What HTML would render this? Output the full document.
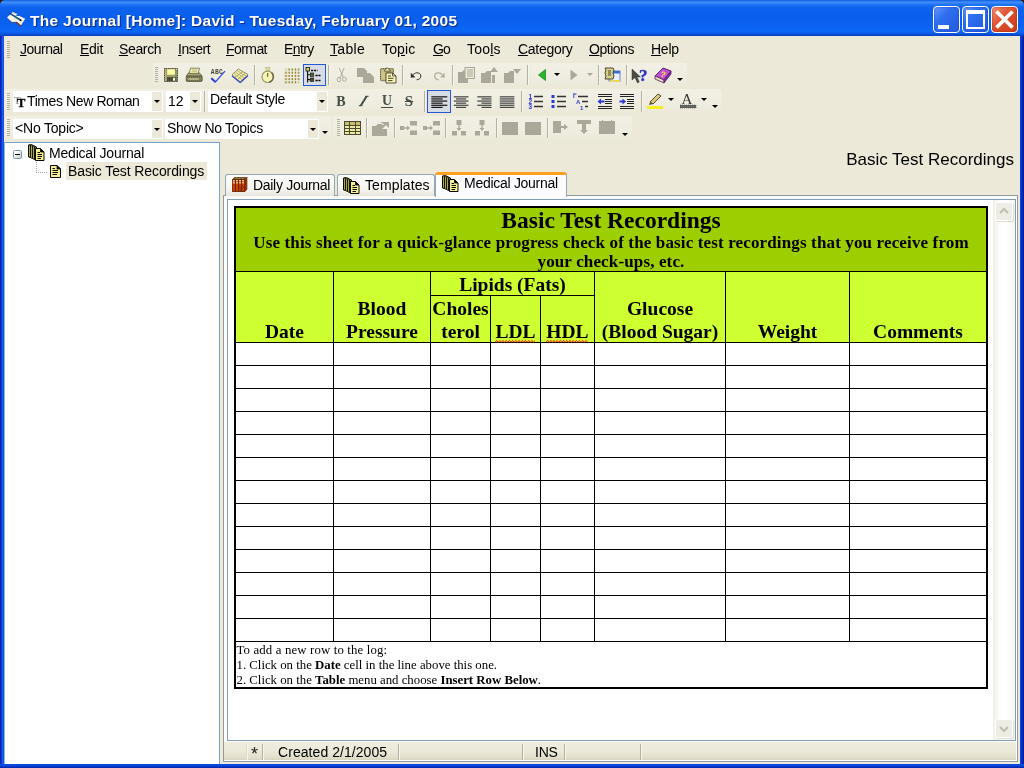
<!DOCTYPE html>
<html>
<head>
<meta charset="utf-8">
<title>The Journal</title>
<style>
*{box-sizing:border-box;margin:0;padding:0}
html,body{width:1024px;height:768px;overflow:hidden;background:#2a1a10}
body{font-family:"Liberation Sans",sans-serif;font-size:14px;color:#000;position:relative}
.abs{position:absolute}
#frame{position:absolute;left:0;top:6px;width:1024px;height:762px;background:linear-gradient(to right,#0a20b8 0,#0a24bc 1px,#1a5cf0 2.5px,#0a4ce0 4px,#0a4ce0 1020px,#0638d0 1021px,#0224b0 1023px,#001a90 1024px)}
#fb{position:absolute;left:0;top:763.5px;width:1024px;height:4.5px;background:linear-gradient(to bottom,#0a4ce0 0,#0a48dc 1.5px,#0630c4 3px,#001c98 4.5px)}
#client{position:absolute;left:4px;top:36px;width:1016px;height:728px;background:#ece9d8}
#titlebar{position:absolute;left:0;top:0;width:1024px;height:36px;border-radius:5px 5px 0 0;
 background:linear-gradient(to bottom,#0a58dc 0px,#2a78f0 1px,#3e8cf8 2.5px,#1c70f2 5px,#0c62ee 8px,#0a5eec 18px,#0a62f2 26px,#0c68f8 31px,#0a5ae6 33.5px,#0644c8 35px,#0644c8 36px)}
#title{position:absolute;left:30px;top:11px;height:20px;line-height:20px;color:#fff;font-weight:bold;font-size:15.5px;white-space:nowrap;text-shadow:1px 1px 1px #0a2a80;letter-spacing:0.3px}
.menu{position:absolute;top:40px;height:18px;line-height:18px;font-size:14px;white-space:nowrap;letter-spacing:-0.45px}
.menu u{text-decoration:underline;text-underline-offset:1px}
.tb{position:absolute;background:linear-gradient(to bottom,#f2f0e5 0,#efede0 60%,#ebe8d8 100%);border-radius:3px}
.sep{position:absolute;width:2px;border-left:1px solid #b4b1a0;border-right:1px solid #f6f5ee}
.grip{position:absolute;width:3px;background:repeating-linear-gradient(to bottom,#b4b19e 0,#b4b19e 1px,transparent 1px,transparent 2px)}
.combo{position:absolute;background:#fff;height:20px;font-size:14px;line-height:19px;white-space:nowrap;overflow:hidden}
.dd{position:absolute;width:10px;height:18px;background:#ece9d8}
.dd:after,.arr:after{content:"";position:absolute;left:2px;top:8px;border:3px solid transparent;border-top:3px solid #000;border-bottom:none}
.arr{position:absolute;width:8px;height:6px}
.arr:after{left:0;top:0}
.arr.g:after{border-top-color:#aca899}
.ico{position:absolute}

.tab{position:absolute;height:22px;border:1px solid #91a7b4;border-bottom:none;border-radius:3px 3px 0 0;background:linear-gradient(to bottom,#fdfdfc 0,#f4f3ee 70%,#e8e6dc 100%);font-size:14px;line-height:20px;white-space:nowrap;letter-spacing:-0.35px}
.hc{position:absolute;font-family:"Liberation Serif",serif;font-weight:bold;font-size:19.5px;line-height:23px;text-align:center;white-space:nowrap}
.sq{background:repeating-linear-gradient(135deg,#e03030 0,#e03030 1px,transparent 1px,transparent 2.5px) 0 100%/100% 2px no-repeat;padding-bottom:1px}
</style>
</head>
<body><div id="root" style="position:absolute;left:0;top:0;width:1024px;height:768px;will-change:transform">
<div id="frame"></div>
<div id="titlebar"></div>
<div id="client"></div>
<div id="fb"></div>
<div id="title">The Journal [Home]: David - Tuesday, February 01, 2005</div>

<svg class="ico" style="left:6px;top:11px" width="21" height="16" viewBox="0 0 21 16"><polygon points="1,7.5 6.5,12 9,11 14,15.5 15.5,14.5 11,10.5 5.5,10.5" fill="#7a3c28"/><polygon points="1,6.5 6.5,1.2 11,3.2 9.5,5 13.5,5 19.2,7.8 15,14.2 11,10.8 6,11" fill="#f8f4e8"/><path d="M6.5 1.2 L11 3.2 L9.5 5.2" fill="none" stroke="#d0c8a8" stroke-width="0.8"/><path d="M3.5 2.2 L14.5 9" stroke="#1a4488" stroke-width="1.5"/><path d="M9 6 L12 8" stroke="#1a8a70" stroke-width="1.5"/><circle cx="14.6" cy="9.3" r="1" fill="#111"/></svg>
<!-- window buttons -->
<div class="abs" style="left:933px;top:6px;width:27px;height:27px;border:1px solid #fff;border-radius:4px;background:linear-gradient(135deg,#6a9af8 0%,#3070f0 35%,#2058e0 100%);box-shadow:inset 0 0 2px #1840b0"></div>
<div class="abs" style="left:938px;top:25px;width:11px;height:4px;background:#fff"></div>
<div class="abs" style="left:962px;top:6px;width:27px;height:27px;border:1px solid #fff;border-radius:4px;background:linear-gradient(135deg,#6a9af8 0%,#3070f0 35%,#2058e0 100%);box-shadow:inset 0 0 2px #1840b0"></div>
<div class="abs" style="left:966px;top:10px;width:19px;height:19px;border:2px solid #fff;border-top-width:4px"></div>
<div class="abs" style="left:991px;top:6px;width:27px;height:27px;border:1px solid #fff;border-radius:4px;background:linear-gradient(135deg,#f09070 0%,#e05030 45%,#c83c18 100%);box-shadow:inset 0 0 2px #902810"></div>
<svg class="ico" style="left:994px;top:9px" width="21" height="21" viewBox="0 0 21 21"><path d="M2.5 2.5 L18.5 18.5 M18.5 2.5 L2.5 18.5" stroke="#fff" stroke-width="3.8"/></svg>
<!-- MENU -->
<div class="grip" style="left:7px;top:41px;height:17px"></div>
<div class="menu" style="left:20px;letter-spacing:-0.49px"><u>J</u>ournal</div>
<div class="menu" style="left:80px;letter-spacing:-0.27px"><u>E</u>dit</div>
<div class="menu" style="left:119px;letter-spacing:-0.36px"><u>S</u>earch</div>
<div class="menu" style="left:178px;letter-spacing:-0.5px"><u>I</u>nsert</div>
<div class="menu" style="left:226px;letter-spacing:-0.57px"><u>F</u>ormat</div>
<div class="menu" style="left:284px;letter-spacing:-0.59px">E<u>n</u>try</div>
<div class="menu" style="left:330px;letter-spacing:0.3px"><u>T</u>able</div>
<div class="menu" style="left:382px;letter-spacing:0.16px">To<u>p</u>ic</div>
<div class="menu" style="left:433px;letter-spacing:-1.0px"><u>G</u>o</div>
<div class="menu" style="left:467px;letter-spacing:0.2px">Too<u>l</u>s</div>
<div class="menu" style="left:518px;letter-spacing:-0.29px"><u>C</u>ategory</div>
<div class="menu" style="left:589px;letter-spacing:-0.47px"><u>O</u>ptions</div>
<div class="menu" style="left:651px;letter-spacing:-0.26px"><u>H</u>elp</div>

<!-- TOOLBARS -->
<div class="tb" style="left:153px;top:63px;width:534px;height:24px"></div>
<div class="tb" style="left:5px;top:89px;width:717px;height:25px"></div>
<div class="tb" style="left:5px;top:116px;width:326px;height:25px"></div>
<div class="tb" style="left:333px;top:116px;width:299px;height:25px"></div>
<!--TB1-->
<div class="grip" style="left:155px;top:67px;height:16px"></div>
<!-- save -->
<svg class="ico" style="left:164px;top:68px" width="14" height="14" viewBox="0 0 14 14"><rect x="0.4" y="0.4" width="13.2" height="13.2" fill="#6e7c5c" stroke="#34281c" stroke-width="0.8" stroke-dasharray="1.1 0.7"/><rect x="1.1" y="1.1" width="1.4" height="11.8" fill="#c8bc78"/><rect x="3.1" y="1.2" width="7.8" height="5.6" fill="#ffffa8"/><rect x="2.5" y="7.5" width="8.6" height="1" fill="#c8bc78"/><rect x="11.6" y="2.5" width="0.9" height="6" fill="#c8bc78"/><rect x="3" y="9.2" width="8.6" height="4" fill="#4e4c3c"/><rect x="9" y="9.8" width="2" height="2.9" fill="#ffffc4"/><rect x="11.8" y="1" width="1" height="1" fill="#f4f0d0"/></svg>
<!-- print -->
<svg class="ico" style="left:185px;top:67px" width="18" height="16" viewBox="0 0 18 16"><polygon points="3.6,5.8 14.4,5.8 17.2,9.2 1.2,9.2" fill="#a0a276" stroke="#4a4a32" stroke-width="0.7"/><polygon points="5.6,1.2 14.6,1.2 13.1,6.4 4.1,6.4" fill="#f6f2b4" stroke="#5a5a3c" stroke-width="0.7"/><path d="M7 3 H12.5 M6.5 4.7 H12" stroke="#a8a670" stroke-width="0.7"/><rect x="1.2" y="9.2" width="16" height="5.3" rx="1.2" fill="#80825c" stroke="#4a4a32" stroke-width="0.7"/><rect x="3.2" y="11.3" width="10.5" height="1.4" fill="#c8c494"/><path d="M2 10.2 H16.5 M2 13.6 H16.5" stroke="#55563a" stroke-width="0.6" stroke-dasharray="1 1"/></svg>
<!-- spell -->
<svg class="ico" style="left:209px;top:66px" width="18" height="18" viewBox="0 0 18 18"><text x="1.8" y="8.3" font-family="Liberation Mono" font-size="6.3" font-weight="bold" fill="#44443a" textLength="12">ABC</text><path d="M2.3 12.3 L6.5 16 L16 5.2" fill="none" stroke="#2a40e0" stroke-width="1.2"/><path d="M2.3 12.3 L6.5 16" fill="none" stroke="#2a40e0" stroke-width="1.9"/></svg>
<!-- open book -->
<svg class="ico" style="left:230px;top:67px" width="20" height="16" viewBox="0 0 20 16"><polyline points="2,8.8 10.2,15.6 18,8.6" fill="none" stroke="#2a40e0" stroke-width="1.3"/><polygon points="8.2,2 18,7.5 10.2,14.7 2,7.8" fill="#f6f2ac" stroke="#6a6a44" stroke-width="0.7"/><path d="M5.2 4.8 L14.2 11 M5 10.3 L13 4.7 M7.6 12.4 L15.5 6.1 M3.7 6.3 L12.2 12.8 M6.7 3.4 L16.2 9.2" stroke="#8a8a58" stroke-width="0.6"/></svg>
<div class="sep" style="left:254px;top:65px;height:20px"></div>
<!-- stopwatch -->
<svg class="ico" style="left:260px;top:66px" width="16" height="18" viewBox="0 0 16 18"><polygon points="5.5,1.5 10,1.5 9,5 6.5,5" fill="#e8e298" stroke="#a8a470" stroke-width="0.6"/><circle cx="7.7" cy="10.8" r="5.7" fill="#f8f4b4" stroke="#9a9868" stroke-width="1.2"/><path d="M11.5 6.5 A5.7 5.7 0 0 1 9 16.3" fill="none" stroke="#6a6844" stroke-width="1.3"/><path d="M7.7 7 V10.8" stroke="#4a4a30" stroke-width="1" fill="none"/></svg>
<!-- dotted grid -->
<svg class="ico" style="left:284px;top:67.5px" width="16" height="16" viewBox="0 0 16 16"><rect x="0.3" y="0.5" width="1.2" height="2" fill="#dcd488" opacity="0.35"/><rect x="1.4" y="0.5" width="1.2" height="2" fill="#88844c" opacity="0.35"/><rect x="3.5" y="0.5" width="1.2" height="2" fill="#dcd488" opacity="1.0"/><rect x="4.6" y="0.5" width="1.2" height="2" fill="#88844c" opacity="1.0"/><rect x="6.7" y="0.5" width="1.2" height="2" fill="#dcd488" opacity="1.0"/><rect x="7.8" y="0.5" width="1.2" height="2" fill="#88844c" opacity="1.0"/><rect x="9.9" y="0.5" width="1.2" height="2" fill="#dcd488" opacity="1.0"/><rect x="11.0" y="0.5" width="1.2" height="2" fill="#88844c" opacity="1.0"/><rect x="13.1" y="0.5" width="1.2" height="2" fill="#dcd488" opacity="1.0"/><rect x="14.2" y="0.5" width="1.2" height="2" fill="#88844c" opacity="1.0"/><rect x="0.3" y="3.7" width="1.2" height="2" fill="#dcd488" opacity="1.0"/><rect x="1.4" y="3.7" width="1.2" height="2" fill="#88844c" opacity="1.0"/><rect x="3.5" y="3.7" width="1.2" height="2" fill="#dcd488" opacity="1.0"/><rect x="4.6" y="3.7" width="1.2" height="2" fill="#88844c" opacity="1.0"/><rect x="6.7" y="3.7" width="1.2" height="2" fill="#dcd488" opacity="1.0"/><rect x="7.8" y="3.7" width="1.2" height="2" fill="#88844c" opacity="1.0"/><rect x="9.9" y="3.7" width="1.2" height="2" fill="#dcd488" opacity="1.0"/><rect x="11.0" y="3.7" width="1.2" height="2" fill="#88844c" opacity="1.0"/><rect x="13.1" y="3.7" width="1.2" height="2" fill="#dcd488" opacity="1.0"/><rect x="14.2" y="3.7" width="1.2" height="2" fill="#88844c" opacity="1.0"/><rect x="0.3" y="6.9" width="1.2" height="2" fill="#dcd488" opacity="1.0"/><rect x="1.4" y="6.9" width="1.2" height="2" fill="#88844c" opacity="1.0"/><rect x="3.5" y="6.9" width="1.2" height="2" fill="#dcd488" opacity="1.0"/><rect x="4.6" y="6.9" width="1.2" height="2" fill="#88844c" opacity="1.0"/><rect x="6.7" y="6.9" width="1.2" height="2" fill="#dcd488" opacity="1.0"/><rect x="7.8" y="6.9" width="1.2" height="2" fill="#88844c" opacity="1.0"/><rect x="9.9" y="6.9" width="1.2" height="2" fill="#dcd488" opacity="1.0"/><rect x="11.0" y="6.9" width="1.2" height="2" fill="#88844c" opacity="1.0"/><rect x="13.1" y="6.9" width="1.2" height="2" fill="#dcd488" opacity="1.0"/><rect x="14.2" y="6.9" width="1.2" height="2" fill="#88844c" opacity="1.0"/><rect x="0.3" y="10.1" width="1.2" height="2" fill="#dcd488" opacity="1.0"/><rect x="1.4" y="10.1" width="1.2" height="2" fill="#88844c" opacity="1.0"/><rect x="3.5" y="10.1" width="1.2" height="2" fill="#dcd488" opacity="1.0"/><rect x="4.6" y="10.1" width="1.2" height="2" fill="#88844c" opacity="1.0"/><rect x="6.7" y="10.1" width="1.2" height="2" fill="#dcd488" opacity="1.0"/><rect x="7.8" y="10.1" width="1.2" height="2" fill="#88844c" opacity="1.0"/><rect x="9.9" y="10.1" width="1.2" height="2" fill="#dcd488" opacity="1.0"/><rect x="11.0" y="10.1" width="1.2" height="2" fill="#88844c" opacity="1.0"/><rect x="13.1" y="10.1" width="1.2" height="2" fill="#dcd488" opacity="1.0"/><rect x="14.2" y="10.1" width="1.2" height="2" fill="#88844c" opacity="1.0"/><rect x="0.3" y="13.3" width="1.2" height="2" fill="#dcd488" opacity="1.0"/><rect x="1.4" y="13.3" width="1.2" height="2" fill="#88844c" opacity="1.0"/><rect x="3.5" y="13.3" width="1.2" height="2" fill="#dcd488" opacity="1.0"/><rect x="4.6" y="13.3" width="1.2" height="2" fill="#88844c" opacity="1.0"/><rect x="6.7" y="13.3" width="1.2" height="2" fill="#dcd488" opacity="1.0"/><rect x="7.8" y="13.3" width="1.2" height="2" fill="#88844c" opacity="1.0"/><rect x="9.9" y="13.3" width="1.2" height="2" fill="#dcd488" opacity="1.0"/><rect x="11.0" y="13.3" width="1.2" height="2" fill="#88844c" opacity="1.0"/><rect x="13.1" y="13.3" width="1.2" height="2" fill="#dcd488" opacity="0.4"/><rect x="14.2" y="13.3" width="1.2" height="2" fill="#88844c" opacity="0.4"/></svg>
<!-- tree (checked) -->
<div class="abs" style="left:303px;top:64px;width:23px;height:22px;border:1px solid #2458d8;background:#d8dce4"></div>
<svg class="ico" style="left:305px;top:66px" width="18" height="18" viewBox="0 0 18 18"><rect x="1" y="1.5" width="3.5" height="3.5" fill="#e0d850" stroke="#222" stroke-width="0.9"/><path d="M2.6 5 V16.5 M2.6 8.7 H5.5 M2.6 13.6 H5.5" stroke="#111" stroke-width="1.1" fill="none"/><rect x="5.3" y="7" width="3.4" height="3.4" fill="#4a6a28" stroke="#222" stroke-width="0.7"/><rect x="5.3" y="12" width="3.4" height="3.4" fill="#4a4a28" stroke="#222" stroke-width="0.7"/><path d="M6 4.5 H12.5 M10.5 9.5 H15.5 M10.5 14.5 H15.5" stroke="#000" stroke-width="1.3" stroke-dasharray="2.2 0.8"/></svg>
<div class="sep" style="left:328px;top:65px;height:20px"></div>
<!-- cut disabled -->
<svg class="ico" style="left:336px;top:66px" width="12" height="18" viewBox="0 0 12 18"><path d="M3.3 2 L7.6 12 M8.2 2 L4 12" stroke="#b0ad9c" stroke-width="1" fill="none"/><ellipse cx="3" cy="13.6" rx="1.8" ry="2.2" fill="none" stroke="#b0ad9c" stroke-width="1"/><ellipse cx="8.4" cy="13.2" rx="1.8" ry="2.2" fill="none" stroke="#b0ad9c" stroke-width="1"/></svg>
<!-- copy disabled -->
<svg class="ico" style="left:357px;top:66.5px" width="18" height="16" viewBox="0 0 18 16"><polygon points="0,1 7,1 10,4 10,10 0,10" fill="#aca899"/><polygon points="6,6 13,6 17,10 17,16 6,16" fill="#aca899"/></svg>
<!-- paste -->
<svg class="ico" style="left:379px;top:66px" width="18" height="18" viewBox="0 0 18 18"><rect x="1.5" y="2.6" width="13" height="12.2" rx="0.8" fill="#b8ac70" stroke="#3c3c28" stroke-width="0.8" stroke-dasharray="1.2 0.6"/><rect x="2.5" y="4" width="4" height="9.5" fill="#cfc58c"/><polygon points="5.2,5.2 8.2,1.6 11.5,5.2" fill="#f4f0b0" stroke="#3c3c28" stroke-width="0.7"/><polygon points="7,7 13.5,7 17,10 17,17 7,17" fill="#fcf8b4" stroke="#2c2c1c" stroke-width="0.8"/><path d="M13.5 7 V10 H17" fill="none" stroke="#2c2c1c" stroke-width="0.7"/><path d="M9 10 H12 M9 12.3 H14.5 M9 14.6 H13.5" stroke="#2c2c1c" stroke-width="0.9"/></svg>
<div class="sep" style="left:402px;top:65px;height:20px"></div>
<!-- undo -->
<svg class="ico" style="left:410px;top:71px" width="12.5" height="10" viewBox="0 0 14 12"><path d="M3 4.5 C7 0.5 12.5 2 12.5 6 C12.5 9 10 10.5 7.5 10.5" fill="none" stroke="#333" stroke-width="1.2"/><polygon points="0.5,2 0.5,8 6,7.5" fill="#333"/></svg>
<!-- redo disabled -->
<svg class="ico" style="left:433px;top:71px" width="12.5" height="10" viewBox="0 0 14 12"><path d="M11 4.5 C7 0.5 1.5 2 1.5 6 C1.5 9 4 10.5 6.5 10.5" fill="none" stroke="#b4b0a0" stroke-width="1.5"/><polygon points="13.5,2 13.5,8 8,7.5" fill="#b4b0a0"/></svg>
<div class="sep" style="left:452px;top:65px;height:20px"></div>
<!-- disabled icons -->
<svg class="ico" style="left:458px;top:67px" width="17" height="16" viewBox="0 0 17 16"><polygon points="0,5 4,5 6,3 10,3 10,16 0,16" fill="#aca899"/><rect x="7" y="0.5" width="9.5" height="11" fill="#ece9d8" stroke="#aca899" stroke-width="1"/><path d="M9 3 H15 M9 5 H15 M9 7 H15 M9 9 H15" stroke="#aca899" stroke-width="1"/></svg>
<svg class="ico" style="left:481px;top:67px" width="18" height="16" viewBox="0 0 18 16"><polygon points="0,6 4,6 6,4 10,4 10,16 0,16" fill="#aca899"/><polygon points="13,0 9,5 17,5" fill="#aca899"/><rect x="11" y="8" width="3" height="8" fill="#aca899"/></svg>
<svg class="ico" style="left:504px;top:67px" width="18" height="16" viewBox="0 0 18 16"><polygon points="0,6 4,6 6,4 10,4 10,16 0,16" fill="#aca899"/><polygon points="9,2 17,2 13,7" fill="#aca899"/></svg>
<div class="sep" style="left:527px;top:65px;height:20px"></div>
<!-- nav arrows -->
<svg class="ico" style="left:538px;top:69px" width="8" height="12" viewBox="0 0 8 12"><polygon points="7.5,0.5 7.5,11.5 0.5,6" fill="#2cb42c" stroke="#1a8a1a" stroke-width="0.8"/></svg>
<div class="arr" style="left:554px;top:73px"></div>
<svg class="ico" style="left:570px;top:69px" width="8" height="12" viewBox="0 0 8 12"><polygon points="0.5,0.5 0.5,11.5 7.5,6" fill="#aca899"/></svg>
<div class="arr g" style="left:587px;top:73px"></div>
<div class="sep" style="left:598px;top:65px;height:20px"></div>
<!-- contacts -->
<svg class="ico" style="left:604px;top:67px" width="17" height="16" viewBox="0 0 17 16"><rect x="5" y="4" width="11" height="10" fill="#e8f0ff" stroke="#6a88c8" stroke-width="1"/><rect x="5" y="4" width="11" height="2.5" fill="#3a6ad0"/><rect x="6" y="13" width="10" height="2" fill="#e8d860"/><polygon points="1,1 9,1 10,3 9,6 10,9 9,12 1,12 2,9 1,6 2,3" fill="#d8d08a" stroke="#4a4a30" stroke-width="1"/><path d="M4 4 H7 M4 6 H7 M4 8 H7" stroke="#4a4a30" stroke-width="1"/></svg>
<div class="sep" style="left:626px;top:65px;height:20px"></div>
<!-- help cursor -->
<svg class="ico" style="left:631px;top:66px" width="18" height="18" viewBox="0 0 18 18"><polygon points="1,3 1,14 4,11.5 6.5,17 8.3,16 6,11 9.5,11" fill="#484c40" stroke="#30342c" stroke-width="0.5"/><text x="8" y="14.5" font-family="Liberation Serif" font-size="17" font-weight="bold" fill="#2a30c8" stroke="#2a30c8" stroke-width="0.4">?</text></svg>
<!-- purple book -->
<svg class="ico" style="left:654px;top:66px" width="18" height="18" viewBox="0 0 18 18"><polygon points="1,10 9,2 17,5 10,14" fill="#c050d0" stroke="#5a2070" stroke-width="1"/><polygon points="1,10 10,14 10,17 1,13" fill="#e8e0b0" stroke="#5a2070" stroke-width="0.8"/><polygon points="10,14 17,5 17,8 10,17" fill="#7a2a98" stroke="#5a2070" stroke-width="0.8"/><text x="6.5" y="11.5" font-family="Liberation Sans" font-size="8.5" font-weight="bold" fill="#f8e838" transform="rotate(18 9 9)">?</text></svg>
<div class="arr" style="left:677px;top:78px"></div>
<!--TB2-->
<div class="grip" style="left:7px;top:93px;height:18px"></div>
<div class="combo" style="left:13px;top:91px;width:150px;height:21px"><span style="position:absolute;left:14px;top:1px;letter-spacing:-0.4px">Times New Roman</span></div>
<svg class="ico" style="left:14px;top:95px" width="13" height="13" viewBox="0 0 13 13"><text x="0" y="9" font-family="Liberation Serif" font-size="10" font-weight="bold" fill="#999">T</text><text x="3" y="12" font-family="Liberation Serif" font-size="12.5" font-weight="bold" fill="#000" stroke="#000" stroke-width="0.3">T</text></svg>
<div class="dd" style="left:152px;top:92px;height:19px"></div>
<div class="combo" style="left:166px;top:91px;width:35px;height:21px"><span style="position:absolute;left:2px;top:1px">12</span></div>
<div class="dd" style="left:190px;top:92px;height:19px"></div>
<div class="sep" style="left:204px;top:91px;height:21px"></div>
<div class="combo" style="left:208px;top:91px;width:120px;height:21px"><span style="position:absolute;left:2px;top:-1px;letter-spacing:-0.35px">Default Style</span></div>
<div class="dd" style="left:317px;top:92px;height:19px"></div>
<div class="abs" style="left:335px;top:93px;width:12px;font-family:'Liberation Serif',serif;font-weight:bold;font-size:14px;line-height:17px;color:#444c44;text-align:center">B</div>
<svg class="ico" style="left:358px;top:95px" width="12" height="12" viewBox="0 0 12 12"><polygon points="7.6,1 9.9,1 3.7,11 1.4,11" fill="#444c44"/><rect x="7" y="0.8" width="3.6" height="1" fill="#444c44"/><rect x="0.8" y="10.2" width="3.6" height="1" fill="#444c44"/></svg>
<div class="abs" style="left:381px;top:92.5px;width:12px;font-family:'Liberation Serif',serif;font-weight:bold;font-size:13.8px;line-height:16px;color:#444c44;text-align:center">U</div><div class="abs" style="left:381px;top:107px;width:12px;height:1px;background:#444c44"></div>
<div class="abs" style="left:403px;top:93px;width:12px;font-family:'Liberation Serif',serif;font-weight:bold;font-size:15px;line-height:17px;color:#444c44;text-align:center;text-decoration:line-through">S</div>
<div class="sep" style="left:424px;top:91px;height:21px"></div>
<div class="abs" style="left:427px;top:90px;width:24px;height:23px;border:1px solid #2458d8;background:#d8dce4"></div>
<svg class="ico" style="left:431px;top:96px" width="17" height="13" viewBox="0 0 17 13"><rect x="0.3" y="0.3" width="16" height="1.1" fill="#000"/><rect x="0.3" y="2.4" width="11.3" height="1.1" fill="#000"/><rect x="0.3" y="4.5" width="16" height="1.1" fill="#000"/><rect x="0.3" y="6.6" width="11.3" height="1.1" fill="#000"/><rect x="0.3" y="8.7" width="16" height="1.1" fill="#000"/><rect x="0.3" y="10.8" width="11.3" height="1.1" fill="#000"/></svg>
<svg class="ico" style="left:453px;top:96px" width="17" height="13" viewBox="0 0 17 13"><rect x="0.8" y="0.3" width="14.7" height="1.1" fill="#333"/><rect x="3" y="2.4" width="10.2" height="1.1" fill="#333"/><rect x="0.8" y="4.5" width="14.7" height="1.1" fill="#333"/><rect x="3" y="6.6" width="10.2" height="1.1" fill="#333"/><rect x="0.8" y="8.7" width="14.7" height="1.1" fill="#333"/><rect x="3" y="10.8" width="10.2" height="1.1" fill="#333"/></svg>
<svg class="ico" style="left:477px;top:96px" width="17" height="13" viewBox="0 0 17 13"><rect x="0.3" y="0.3" width="14.2" height="1.1" fill="#333"/><rect x="4.5" y="2.4" width="10" height="1.1" fill="#333"/><rect x="0.3" y="4.5" width="14.2" height="1.1" fill="#333"/><rect x="4.5" y="6.6" width="10" height="1.1" fill="#333"/><rect x="0.3" y="8.7" width="14.2" height="1.1" fill="#333"/><rect x="4.5" y="10.8" width="10" height="1.1" fill="#333"/></svg>
<svg class="ico" style="left:499px;top:96px" width="17" height="13" viewBox="0 0 17 13"><rect x="0.8" y="0.3" width="14.6" height="1.1" fill="#333"/><rect x="0.8" y="2.4" width="14.6" height="1.1" fill="#333"/><rect x="0.8" y="4.5" width="14.6" height="1.1" fill="#333"/><rect x="0.8" y="6.6" width="14.6" height="1.1" fill="#333"/><rect x="0.8" y="8.7" width="14.6" height="1.1" fill="#333"/><rect x="0.8" y="10.8" width="14.6" height="1.1" fill="#333"/></svg>
<div class="sep" style="left:521px;top:91px;height:21px"></div>
<!-- numbered list -->
<svg class="ico" style="left:528px;top:93px" width="16" height="17" viewBox="0 0 16 17"><g fill="#2a3ad0" font-family="Liberation Sans" font-weight="bold" font-size="6.5"><text x="0.5" y="5.5">1</text><text x="0.5" y="10.5">2</text><text x="0.5" y="15.8">3</text></g><path d="M6 3.5 H15 M6 8.5 H15 M6 13.5 H15" stroke="#333" stroke-width="1.3"/></svg>
<!-- bullet list -->
<svg class="ico" style="left:551px;top:93px" width="16" height="17" viewBox="0 0 16 17"><g fill="#2a3ad0"><rect x="0.5" y="2" width="3" height="3"/><rect x="0.5" y="7" width="3" height="3"/><rect x="0.5" y="12" width="3" height="3"/></g><path d="M6 3.5 H15 M6 8.5 H15 M6 13.5 H15" stroke="#333" stroke-width="1.3"/></svg>
<!-- outline list -->
<svg class="ico" style="left:573px;top:93px" width="16" height="17" viewBox="0 0 16 17"><g fill="#2a3ad0" font-family="Liberation Sans" font-weight="bold" font-size="6"><text x="0" y="5">I</text><text x="3" y="11">A</text><text x="7" y="17">1</text></g><rect x="0" y="0.5" width="3.5" height="1" fill="#2a3ad0"/><path d="M5 3.5 H15 M9 8.5 H15 M12 13.5 H15" stroke="#333" stroke-width="1.4"/></svg>
<!-- outdent -->
<svg class="ico" style="left:597px;top:93px" width="16" height="17" viewBox="0 0 16 17"><path d="M1 1.5 H15 M1 3.5 H15 M8 6.5 H15 M8 8.5 H15 M8 10.5 H15 M1 13.5 H15 M1 15.5 H15" stroke="#222" stroke-width="1"/><polygon points="0.5,8.5 4,5.5 4,11.5" fill="#2a3ad0"/><rect x="4" y="7.5" width="3.5" height="2" fill="#2a3ad0"/></svg>
<!-- indent -->
<svg class="ico" style="left:619px;top:93px" width="16" height="17" viewBox="0 0 16 17"><path d="M1 1.5 H15 M1 3.5 H15 M8 6.5 H15 M8 8.5 H15 M8 10.5 H15 M1 13.5 H15 M1 15.5 H15" stroke="#222" stroke-width="1"/><polygon points="7,8.5 3.5,5.5 3.5,11.5" fill="#2a3ad0"/><rect x="0.5" y="7.5" width="3.5" height="2" fill="#2a3ad0"/></svg>
<div class="sep" style="left:641px;top:91px;height:21px"></div>
<!-- highlighter -->
<svg class="ico" style="left:647px;top:93px" width="17" height="16" viewBox="0 0 17 16"><polygon points="3,9 11,1 14,3 6,11" fill="#d8c880" stroke="#5a5030" stroke-width="1"/><polygon points="3,9 6,11 2,12" fill="#5a5030"/><rect x="0" y="13" width="16" height="3" fill="#f4f020"/></svg>
<div class="arr" style="left:668px;top:98px"></div>
<!-- font color -->
<svg class="ico" style="left:680px;top:92px" width="17" height="17" viewBox="0 0 17 17"><text x="1.5" y="11.5" font-family="Liberation Serif" font-size="15" fill="#333">A</text><rect x="0" y="13" width="16" height="3" fill="#666" stroke="#333" stroke-width="0.6" stroke-dasharray="1 1"/></svg>
<div class="arr" style="left:701px;top:98px"></div>
<div class="arr" style="left:712px;top:105px"></div>
<!--TB3-->
<div class="grip" style="left:7px;top:119px;height:18px"></div>
<div class="combo" style="left:13px;top:118.5px;width:150px"><span style="position:absolute;left:2px;top:0.3px;letter-spacing:-0.2px">&lt;No Topic&gt;</span></div>
<div class="dd" style="left:152px;top:119.5px"></div>
<div class="combo" style="left:165px;top:118.5px;width:154px"><span style="position:absolute;left:2px;top:0.3px;letter-spacing:-0.3px">Show No Topics</span></div>
<div class="dd" style="left:308px;top:119.5px"></div>
<div class="arr" style="left:322px;top:131px"></div>
<div class="grip" style="left:337px;top:119px;height:18px"></div>
<!-- table icon -->
<svg class="ico" style="left:344px;top:121px" width="17" height="14" viewBox="0 0 17 14"><rect x="0.5" y="0.5" width="16" height="13" fill="#f0eaa0" stroke="#4a4a30" stroke-width="1"/><rect x="1" y="1" width="15" height="3" fill="#c8c070"/><path d="M0.5 4.5 H16.5 M0.5 7.5 H16.5 M0.5 10.5 H16.5 M5.5 1 V13 M11.5 1 V13" stroke="#4a4a30" stroke-width="1"/></svg>
<div class="sep" style="left:366px;top:118px;height:20px"></div>
<svg class="ico" style="left:372px;top:120px" width="18" height="16" viewBox="0 0 18 16"><polygon points="0,6 4,6 6,4 10,4 10,16 0,16" fill="#aca899"/><polygon points="8,2 17,2 17,8 14,5 10,9 8,7 12,4" fill="#aca899"/><rect x="10" y="9" width="5" height="7" fill="#aca899"/></svg>
<div class="sep" style="left:394px;top:118px;height:20px"></div>
<svg class="ico" style="left:400px;top:121px" width="17" height="14" viewBox="0 0 17 14"><g fill="#aca899"><rect x="0" y="5" width="4" height="4"/><polygon points="4,6.3 7,6.3 7,4.5 10,7 7,9.5 7,7.7 4,7.7"/><rect x="10" y="0" width="7" height="4.5"/><rect x="10" y="9.5" width="7" height="4.5"/></g></svg>
<svg class="ico" style="left:423px;top:121px" width="17" height="14" viewBox="0 0 17 14"><g fill="#aca899"><rect x="0" y="5" width="4" height="4"/><polygon points="4,6.3 7,6.3 7,4.5 10,7 7,9.5 7,7.7 4,7.7"/><rect x="10" y="0" width="7" height="4.5"/><rect x="10" y="9.5" width="7" height="4.5"/></g></svg>
<div class="sep" style="left:445px;top:118px;height:20px"></div>
<svg class="ico" style="left:452px;top:120px" width="14" height="16" viewBox="0 0 14 16"><g fill="#aca899"><rect x="4.5" y="0" width="5" height="5"/><polygon points="6.3,5 7.7,5 7.7,8 9.5,8 7,11 4.5,8 6.3,8"/><rect x="0" y="11" width="5" height="4.5"/><rect x="9" y="11" width="5" height="4.5"/></g></svg>
<svg class="ico" style="left:475px;top:120px" width="14" height="16" viewBox="0 0 14 16"><g fill="#aca899"><rect x="4.5" y="0" width="5" height="5"/><polygon points="6.3,5 7.7,5 7.7,8 9.5,8 7,11 4.5,8 6.3,8"/><rect x="0" y="11" width="5" height="4.5"/><rect x="9" y="11" width="5" height="4.5"/></g></svg>
<div class="sep" style="left:496px;top:118px;height:20px"></div>
<div class="abs" style="left:502px;top:122px;width:16px;height:13px;background:#aca899"></div>
<div class="abs" style="left:525px;top:122px;width:16px;height:13px;background:#aca899"></div>
<div class="sep" style="left:547px;top:118px;height:20px"></div>
<svg class="ico" style="left:553px;top:121px" width="16" height="14" viewBox="0 0 16 14"><g fill="#aca899"><rect x="0" y="0" width="8" height="12"/><polygon points="8,5 11,5 11,3 15,6 11,9 11,7 8,7"/></g></svg>
<svg class="ico" style="left:577px;top:120px" width="14" height="16" viewBox="0 0 14 16"><g fill="#aca899"><rect x="0" y="0" width="14" height="4"/><rect x="5" y="4" width="4" height="6"/><polygon points="3,10 11,10 7,14"/></g></svg>
<svg class="ico" style="left:599px;top:120px" width="17" height="14" viewBox="0 0 17 14"><g fill="#aca899"><rect x="0" y="1" width="16" height="13"/><rect x="3" y="0" width="1" height="2"/><rect x="12" y="0" width="1" height="2"/></g></svg>
<div class="arr" style="left:622px;top:133px"></div>
<!--TREE-->
<div class="abs" style="left:4px;top:142px;width:216px;height:622px;background:#fff;border:1px solid #78a4c8;border-left-color:#9ab8d4;border-bottom:none"></div>
<div class="abs" style="left:13px;top:150px;width:9px;height:9px;border:1px solid #7898b8;border-radius:1.5px;background:linear-gradient(135deg,#fff 20%,#d0ccbc)"></div>
<div class="abs" style="left:15px;top:154px;width:5px;height:1px;background:#000"></div>
<svg class="ico" style="left:28px;top:144px" width="17" height="17" viewBox="0 0 17 17"><polygon points="0.5,1 2.5,0.5 4.5,1 6.5,2 8.5,3 8.5,16 6.5,15.5 4.5,14.5 2.5,13.5 0.5,13" fill="#7a8030" stroke="#0a0a04" stroke-width="1"/><path d="M2.5 1 V13.5 M4.5 1.5 V14.5 M6.5 2.5 V15.5" stroke="#0a0a04" stroke-width="0.9"/><path d="M1.5 2 V12.5 M3.5 2.5 V13.5 M5.5 3.5 V14.5" stroke="#c8c850" stroke-width="0.6"/><polygon points="7.5,4.5 12.5,4.5 16,8 16,16.5 7.5,16.5" fill="#f8f090" stroke="#0a0a04" stroke-width="1"/><path d="M12.5 4.5 V8 H16" fill="#0a0a04" stroke="#0a0a04" stroke-width="0.8"/><path d="M9.5 8.5 H12 M9.5 10.5 H14 M9.5 12.5 H14 M9.5 14.5 H13" stroke="#0a0a04" stroke-width="1"/></svg>
<div class="abs" style="left:49px;top:144px;line-height:18px;font-size:14px;letter-spacing:-0.2px;white-space:nowrap">Medical Journal</div>
<div class="abs" style="left:36px;top:162px;width:1px;height:10px;background:repeating-linear-gradient(to bottom,#a0a090 0,#a0a090 1px,transparent 1px,transparent 2px)"></div>
<div class="abs" style="left:36px;top:172px;width:12px;height:1px;background:repeating-linear-gradient(to right,#a0a090 0,#a0a090 1px,transparent 1px,transparent 2px)"></div>
<svg class="ico" style="left:50px;top:165px" width="11" height="13" viewBox="0 0 11 13"><polygon points="0.5,0.5 7,0.5 10.5,4 10.5,12.5 0.5,12.5" fill="#f8f090" stroke="#0a0a04" stroke-width="1"/><path d="M7 0.5 V4 H10.5 Z" fill="#0a0a04" stroke="#0a0a04" stroke-width="0.8"/><path d="M2.5 3.5 H5 M2.5 5.5 H8 M2.5 7.5 H8 M2.5 9.5 H7" stroke="#0a0a04" stroke-width="1"/></svg>
<div class="abs" style="left:66px;top:162px;width:141px;height:18px;background:#ece9d8"></div>
<div class="abs" style="left:68px;top:162px;line-height:18px;font-size:14px;letter-spacing:-0.1px;white-space:nowrap">Basic Test Recordings</div>
<!--RIGHT-->
<div class="abs" style="right:10px;top:150px;font-size:17px;line-height:20px;white-space:nowrap;letter-spacing:0px" id="hdr">Basic Test Recordings</div>
<!-- tab pane -->
<div class="abs" style="left:223px;top:195px;width:795px;height:567px;border:1px solid #919b9c;background:#fcfcfe;box-shadow:inset -1px -1px 0 #fff"></div>
<div class="tab" style="left:225px;top:174px;width:110px"><span class="abs" style="left:27px;top:0px;letter-spacing:-0.3px">Daily Journal</span></div>
<svg class="ico" style="left:232px;top:176.5px" width="16" height="16" viewBox="0 0 16 16"><polygon points="0.3,2.8 2.3,0.6 14.9,0.6 12.8,2.8" fill="#9aa438" stroke="#5a1400" stroke-width="0.7"/><polygon points="12.8,2.8 14.9,0.6 14.9,12.2 12.8,14.4" fill="#b43c00" stroke="#5a1400" stroke-width="0.7"/><rect x="0.3" y="2.8" width="12.5" height="11.6" fill="#c84400" stroke="#5a1400" stroke-width="0.8"/><path d="M3.5 2.8 V14.4 M6.6 2.8 V14.4 M9.6 2.8 V14.4" stroke="#5a1400" stroke-width="0.8"/><path d="M3.4 0.8 L2.2 2.6 M6.5 0.8 L5.3 2.6 M9.6 0.8 L8.4 2.6 M12.6 0.8 L11.4 2.6" stroke="#5a1400" stroke-width="0.8"/><rect x="0.9" y="3.2" width="1.9" height="1.1" fill="#f4ecb0"/><rect x="0.9" y="5.3" width="1.9" height="1.1" fill="#f4ecb0"/><rect x="4.0" y="3.2" width="1.9" height="1.1" fill="#f4ecb0"/><rect x="4.0" y="5.3" width="1.9" height="1.1" fill="#f4ecb0"/><rect x="7.1" y="3.2" width="1.9" height="1.1" fill="#f4ecb0"/><rect x="7.1" y="5.3" width="1.9" height="1.1" fill="#f4ecb0"/><rect x="10.1" y="3.2" width="1.9" height="1.1" fill="#f4ecb0"/><rect x="10.1" y="5.3" width="1.9" height="1.1" fill="#f4ecb0"/><rect x="1" y="7.2" width="1" height="1" fill="#f01010"/><path d="M7.5 10 L9 12 M10.5 9 L12 11.5 M8 12.5 L9.2 14" stroke="#7a2400" stroke-width="0.8"/></svg>
<div class="tab" style="left:337px;top:174px;width:98px"><span class="abs" style="left:27px;top:0px;letter-spacing:0.1px">Templates</span></div>
<svg class="ico" style="left:343px;top:177px" width="17" height="17" viewBox="0 0 17 17"><polygon points="0.5,1 2.5,0.5 4.5,1 6.5,2 8.5,3 8.5,16 6.5,15.5 4.5,14.5 2.5,13.5 0.5,13" fill="#7a8030" stroke="#0a0a04" stroke-width="1"/><path d="M2.5 1 V13.5 M4.5 1.5 V14.5 M6.5 2.5 V15.5" stroke="#0a0a04" stroke-width="0.9"/><path d="M1.5 2 V12.5 M3.5 2.5 V13.5 M5.5 3.5 V14.5" stroke="#c8c850" stroke-width="0.6"/><polygon points="7.5,4.5 12.5,4.5 16,8 16,16.5 7.5,16.5" fill="#f8f090" stroke="#0a0a04" stroke-width="1"/><path d="M12.5 4.5 V8 H16" fill="#0a0a04" stroke="#0a0a04" stroke-width="0.8"/><path d="M9.5 8.5 H12 M9.5 10.5 H14 M9.5 12.5 H14 M9.5 14.5 H13" stroke="#0a0a04" stroke-width="1"/></svg>
<div class="tab" style="left:435px;top:172px;width:132px;height:25px;background:#fcfcfe;border-top:3px solid #ffa020;border-color:#ffa020 #91a7b4 #91a7b4 #91a7b4"><span class="abs" style="left:28px;top:-2px;letter-spacing:-0.28px">Medical Journal</span></div>
<svg class="ico" style="left:442px;top:175px" width="17" height="17" viewBox="0 0 17 17"><polygon points="0.5,1 2.5,0.5 4.5,1 6.5,2 8.5,3 8.5,16 6.5,15.5 4.5,14.5 2.5,13.5 0.5,13" fill="#7a8030" stroke="#0a0a04" stroke-width="1"/><path d="M2.5 1 V13.5 M4.5 1.5 V14.5 M6.5 2.5 V15.5" stroke="#0a0a04" stroke-width="0.9"/><path d="M1.5 2 V12.5 M3.5 2.5 V13.5 M5.5 3.5 V14.5" stroke="#c8c850" stroke-width="0.6"/><polygon points="7.5,4.5 12.5,4.5 16,8 16,16.5 7.5,16.5" fill="#f8f090" stroke="#0a0a04" stroke-width="1"/><path d="M12.5 4.5 V8 H16" fill="#0a0a04" stroke="#0a0a04" stroke-width="0.8"/><path d="M9.5 8.5 H12 M9.5 10.5 H14 M9.5 12.5 H14 M9.5 14.5 H13" stroke="#0a0a04" stroke-width="1"/></svg>
<!-- editor -->
<div class="abs" style="left:227px;top:199px;width:789px;height:542px;border:1px solid #7f9db9;background:#fff"></div>
<!-- scrollbar -->
<div class="abs" style="left:993px;top:200px;width:22px;height:540px;background:linear-gradient(to right,#f0eee6 0,#fdfdfb 30%,#fff 60%,#f6f5f0 100%)"></div>
<div class="abs" style="left:995px;top:202px;width:18px;height:19px;border:1px solid #fff;border-radius:2px;background:#eeede5;box-shadow:1px 1px 1px #dcd9cc"></div>
<svg class="ico" style="left:999px;top:207px" width="10" height="7" viewBox="0 0 10 7"><path d="M1 6 L5 2 L9 6" fill="none" stroke="#c0bdb0" stroke-width="2"/></svg>
<div class="abs" style="left:995px;top:719px;width:18px;height:19px;border:1px solid #fff;border-radius:2px;background:#eeede5;box-shadow:1px 1px 1px #dcd9cc"></div>
<svg class="ico" style="left:999px;top:726px" width="10" height="7" viewBox="0 0 10 7"><path d="M1 1 L5 5 L9 1" fill="none" stroke="#c0bdb0" stroke-width="2"/></svg>
<!-- table -->
<div class="abs" style="left:234px;top:206px;width:754px;height:483px;border:2px solid #000;background:#fff"></div>
<div class="abs" style="left:236px;top:208px;width:750px;height:63px;background:#9cce00"></div>
<div class="abs" style="left:236px;top:272px;width:750px;height:70px;background:#ceff31"></div>
<div class="abs" style="left:236px;top:271px;width:750px;height:1px;background:#000"></div>
<div class="abs" style="left:430px;top:295px;width:164px;height:1px;background:#000"></div>
<div class="abs" style="left:236px;top:342px;width:750px;height:1px;background:#000"></div>
<div class="abs" style="left:236px;top:365px;width:750px;height:1px;background:#000"></div>
<div class="abs" style="left:236px;top:388px;width:750px;height:1px;background:#000"></div>
<div class="abs" style="left:236px;top:411px;width:750px;height:1px;background:#000"></div>
<div class="abs" style="left:236px;top:434px;width:750px;height:1px;background:#000"></div>
<div class="abs" style="left:236px;top:457px;width:750px;height:1px;background:#000"></div>
<div class="abs" style="left:236px;top:480px;width:750px;height:1px;background:#000"></div>
<div class="abs" style="left:236px;top:503px;width:750px;height:1px;background:#000"></div>
<div class="abs" style="left:236px;top:526px;width:750px;height:1px;background:#000"></div>
<div class="abs" style="left:236px;top:549px;width:750px;height:1px;background:#000"></div>
<div class="abs" style="left:236px;top:572px;width:750px;height:1px;background:#000"></div>
<div class="abs" style="left:236px;top:595px;width:750px;height:1px;background:#000"></div>
<div class="abs" style="left:236px;top:618px;width:750px;height:1px;background:#000"></div>
<div class="abs" style="left:236px;top:641px;width:750px;height:1px;background:#000"></div>
<div class="abs" style="left:333px;top:271px;width:1px;height:371px;background:#000"></div>
<div class="abs" style="left:430px;top:271px;width:1px;height:371px;background:#000"></div>
<div class="abs" style="left:490px;top:295px;width:1px;height:347px;background:#000"></div>
<div class="abs" style="left:540px;top:295px;width:1px;height:347px;background:#000"></div>
<div class="abs" style="left:594px;top:271px;width:1px;height:371px;background:#000"></div>
<div class="abs" style="left:725px;top:271px;width:1px;height:371px;background:#000"></div>
<div class="abs" style="left:849px;top:271px;width:1px;height:371px;background:#000"></div>
<div class="hc" style="left:236px;top:207px;width:750px;font-size:23.5px;line-height:26px">Basic Test Recordings</div>
<div class="hc" style="left:236px;top:233px;width:750px;font-size:17px;line-height:19px;letter-spacing:0.14px">Use this sheet for a quick-glance progress check of the basic test recordings that you receive from<br>your check-ups, etc.</div>
<div class="hc" style="left:236px;top:320px;width:97px;">Date</div>
<div class="hc" style="left:334px;top:297px;width:96px;">Blood<br>Pressure</div>
<div class="hc" style="left:431px;top:273px;width:163px;">Lipids (Fats)</div>
<div class="hc" style="left:431px;top:297px;width:59px;">Choles<br>terol</div>
<div class="hc" style="left:491px;top:320px;width:49px;">LDL</div>
<div class="hc" style="left:541px;top:320px;width:53px;">HDL</div>
<div class="hc" style="left:595px;top:297px;width:130px;">Glucose<br>(Blood Sugar)</div>
<div class="hc" style="left:726px;top:320px;width:123px;">Weight</div>
<div class="hc" style="left:850px;top:320px;width:136px;">Comments</div>
<div class="abs" style="left:236.5px;top:643px;font-family:'Liberation Serif',serif;font-size:12.8px;line-height:15px;white-space:nowrap"><span style="letter-spacing:0.15px">To add a new row to the log:</span><br>1. Click on the <b>Date</b> cell in the line above this one.<br>2. Click on the <b>Table</b> menu and choose <b>Insert Row Below</b>.</div>
<svg class="ico" style="left:495px;top:339.6px" width="40" height="3" viewBox="0 0 40 3"><polyline points="0.0,2.4 1.6,0.4 3.2,2.4 4.8,0.4 6.4,2.4 8.0,0.4 9.6,2.4 11.2,0.4 12.8,2.4 14.4,0.4 16.0,2.4 17.6,0.4 19.2,2.4 20.8,0.4 22.4,2.4 24.0,0.4 25.6,2.4 27.2,0.4 28.8,2.4 30.4,0.4 32.0,2.4 33.6,0.4 35.2,2.4 36.8,0.4 38.4,2.4 40.0,0.4" fill="none" stroke="#f01010" stroke-width="0.9"/></svg>
<svg class="ico" style="left:546px;top:339.6px" width="43" height="3" viewBox="0 0 43 3"><polyline points="0.0,2.4 1.6,0.4 3.2,2.4 4.8,0.4 6.4,2.4 8.0,0.4 9.6,2.4 11.2,0.4 12.8,2.4 14.4,0.4 16.0,2.4 17.6,0.4 19.2,2.4 20.8,0.4 22.4,2.4 24.0,0.4 25.6,2.4 27.2,0.4 28.8,2.4 30.4,0.4 32.0,2.4 33.6,0.4 35.2,2.4 36.8,0.4 38.4,2.4 40.0,0.4 41.6,2.4" fill="none" stroke="#f01010" stroke-width="0.9"/></svg>
<!-- status bar -->
<div class="abs" style="left:224px;top:742px;width:792px;height:18px;background:linear-gradient(to bottom,#efede0 0,#ece9d8 50%,#e2dfcc 85%,#d8d4c0 100%)"></div>
<div class="sep" style="left:246px;top:744px;height:16px;border-left-color:#dcd9c8"></div>
<div class="sep" style="left:262px;top:744px;height:16px"></div>
<div class="sep" style="left:398px;top:744px;height:16px"></div>
<div class="sep" style="left:522px;top:744px;height:16px"></div>
<div class="sep" style="left:564px;top:744px;height:16px"></div>
<div class="sep" style="left:640px;top:744px;height:16px"></div>
<div class="abs" style="left:251px;top:743px;font-size:18px;line-height:22px;color:#222">*</div>
<div class="abs" style="left:278px;top:743px;font-size:14px;line-height:18px;letter-spacing:0.06px;white-space:nowrap">Created 2/1/2005</div>
<div class="abs" style="left:535px;top:743px;font-size:14px;line-height:18px;letter-spacing:-0.2px">INS</div>
</div></body>
</html>
